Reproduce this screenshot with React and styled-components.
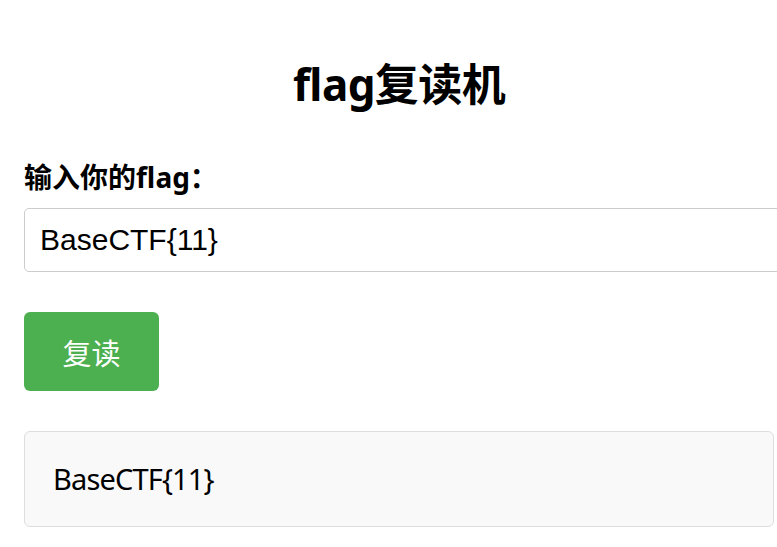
import React, { useState } from 'react'
import styled, { createGlobalStyle } from 'styled-components'

const GlobalStyle = createGlobalStyle`
    html, body {
        margin: 0;
        padding: 0;
        background: #fff;
        overflow: hidden;
    }
    body {
        font-family: "Noto Sans", "Noto Sans CJK SC", sans-serif;
        color: #000;
    }
`

const Page = styled.div`
    width: 750px;
    margin: 0 24px;
    padding-top: 58px;
`

const Title = styled.h1`
    margin: 0 0 50px;
    text-align: center;
    font-size: 44px;
    line-height: 52px;
    font-weight: 700;
    letter-spacing: -0.6px;
`

const Label = styled.label`
    display: block;
    margin-bottom: 14px;
    font-size: 28px;
    line-height: 34px;
    font-weight: 700;
`

const Input = styled.input`
    display: block;
    box-sizing: content-box;
    width: 100%;
    height: 32px;
    padding: 15px;
    margin: 0 0 40px;
    border: 1px solid #ccc;
    border-radius: 5px;
    font-family: "Liberation Sans", Arial, "Noto Sans CJK SC", sans-serif;
    font-size: 30px;
    color: #000;
    outline: none;
`

const Button = styled.button`
    display: block;
    height: 79px;
    padding: 0 38.5px;
    margin: 0 0 40px;
    border: none;
    border-radius: 6px;
    background: #4caf50;
    color: #fff;
    font-family: "Liberation Sans", Arial, "Noto Sans CJK SC", sans-serif;
    font-size: 29px;
    cursor: pointer;
`

const Output = styled.div`
    box-sizing: border-box;
    width: 100%;
    padding: 29px 28px;
    background: #f9f9f9;
    border: 1px solid #ddd;
    border-radius: 6px;
    font-size: 29px;
    line-height: 36px;
    letter-spacing: -0.85px;
`

export default function App() {
    const [flag, setFlag] = useState('BaseCTF{11}')
    const [echo, setEcho] = useState('BaseCTF{11}')

    return (
        <>
            <GlobalStyle />
            <Page>
                <Title>flag复读机</Title>
                <Label htmlFor="flag">输入你的flag：</Label>
                <Input id="flag" value={flag} onChange={(e) => setFlag(e.target.value)} />
                <Button onClick={() => setEcho(flag)}>复读</Button>
                <Output>{echo}</Output>
            </Page>
        </>
    )
}
